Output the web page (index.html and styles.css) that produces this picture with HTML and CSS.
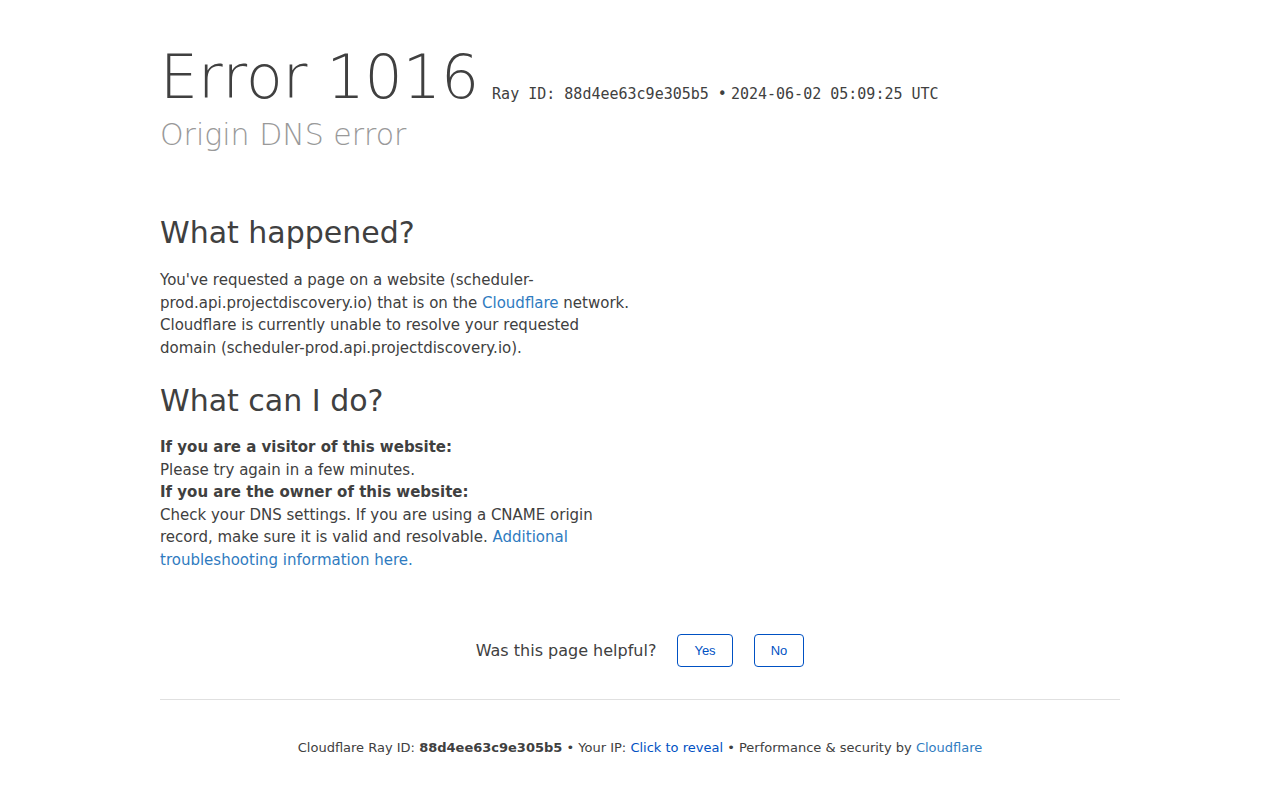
FILE: index.html
```html
<!DOCTYPE html>
<html lang="en">
<head>
<meta charset="utf-8">
<title>Origin DNS error | scheduler-prod.api.projectdiscovery.io | Cloudflare</title>
<link rel="stylesheet" href="styles.css">
</head>
<body>
<div class="wrapper">
  <header class="header">
    <div class="title-row">
      <h1 class="title">Error 1016</h1>
      <span class="ray">Ray ID: 88d4ee63c9e305b5 &bull;</span>
      <span class="ray">2024-06-02 05:09:25 UTC</span>
    </div>
    <h2 class="subheadline">Origin DNS error</h2>
  </header>

  <section class="content">
    <div class="column">
      <h2 class="section-title">What happened?</h2>
      <p>You've requested a page on a website (scheduler-prod.api.projectdiscovery.io) that is on the <a class="link" href="#">Cloudflare</a> network. Cloudflare is currently unable to resolve your requested domain (scheduler-prod.api.projectdiscovery.io).</p>
    </div>
    <div class="column">
      <h2 class="section-title second">What can I do?</h2>
      <p><strong>If you are a visitor of this website:</strong><br>Please try again in a few minutes.</p>
      <p><strong>If you are the owner of this website:</strong><br>Check your DNS settings. If you are using a CNAME origin record, make sure it is valid and resolvable. <a class="link" href="#">Additional troubleshooting information here.</a></p>
    </div>
  </section>

  <div class="feedback">
    <span class="feedback-text">Was this page helpful?</span>
    <button class="feedback-btn" type="button">Yes</button>
    <button class="feedback-btn" type="button">No</button>
  </div>

  <footer class="footer">
    <span>Cloudflare Ray ID: <strong>88d4ee63c9e305b5</strong></span>
    <span class="sep">&bull;</span>
    <span>Your IP: <button class="reveal" type="button">Click to reveal</button></span>
    <span class="sep">&bull;</span>
    <span>Performance &amp; security by <a class="link" href="#">Cloudflare</a></span>
  </footer>
</div>
</body>
</html>
```

FILE: styles.css
```css
html, body {
  margin: 0;
  padding: 0;
  background: #ffffff;
}

body {
  font-family: "DejaVu Sans", sans-serif;
  font-size: 15px;
  line-height: 1.5;
  color: #404040;
}

.wrapper {
  max-width: 960px;
  margin: 0 auto;
}

.header {
  padding-top: 40px;
}

.title-row {
  display: flex;
  align-items: flex-end;
}

.title {
  margin: 0 13px 0 0;
  font-size: 60px;
  font-weight: 200;
  line-height: 1.25;
  color: #404040;
}

.ray {
  font-family: "DejaVu Sans Mono", monospace;
  font-size: 15px;
  line-height: 22px;
  color: #404040;
  margin: 0 4px 10px 0;
}

.subheadline {
  margin: 0;
  font-size: 30px;
  font-weight: 200;
  line-height: 1.3;
  color: #999999;
}

.content {
  margin-top: 59px;
}

.column {
  width: 475px;
}

.section-title {
  margin: 0 0 17px;
  font-size: 30px;
  font-weight: 400;
  line-height: 1.3;
  color: #404040;
}

.section-title.second {
  margin-top: 22px;
  margin-bottom: 16px;
}

p {
  margin: 0;
}

strong {
  font-weight: 700;
}

.link {
  color: #2f7bbf;
  text-decoration: none;
}

.feedback {
  display: flex;
  justify-content: center;
  align-items: center;
  padding-top: 63px;
  padding-bottom: 32px;
}

.feedback-text {
  font-size: 16px;
  color: #404040;
}

.feedback-btn {
  margin-left: 21px;
  padding: 8px 16px;
  font-family: "Liberation Sans", Arial, sans-serif;
  font-size: 13px;
  line-height: 15px;
  color: #0051c3;
  background: #ffffff;
  border: 1px solid #0051c3;
  border-radius: 4px;
}

.footer {
  border-top: 1px solid #e0e0e0;
  padding: 38px 0 40px;
  text-align: center;
  font-size: 13px;
  line-height: 1.5;
  color: #404040;
}

.reveal {
  padding: 0;
  border: 0;
  background: none;
  font-family: "DejaVu Sans", sans-serif;
  font-size: 13px;
  line-height: inherit;
  color: #0051c3;
}
```
